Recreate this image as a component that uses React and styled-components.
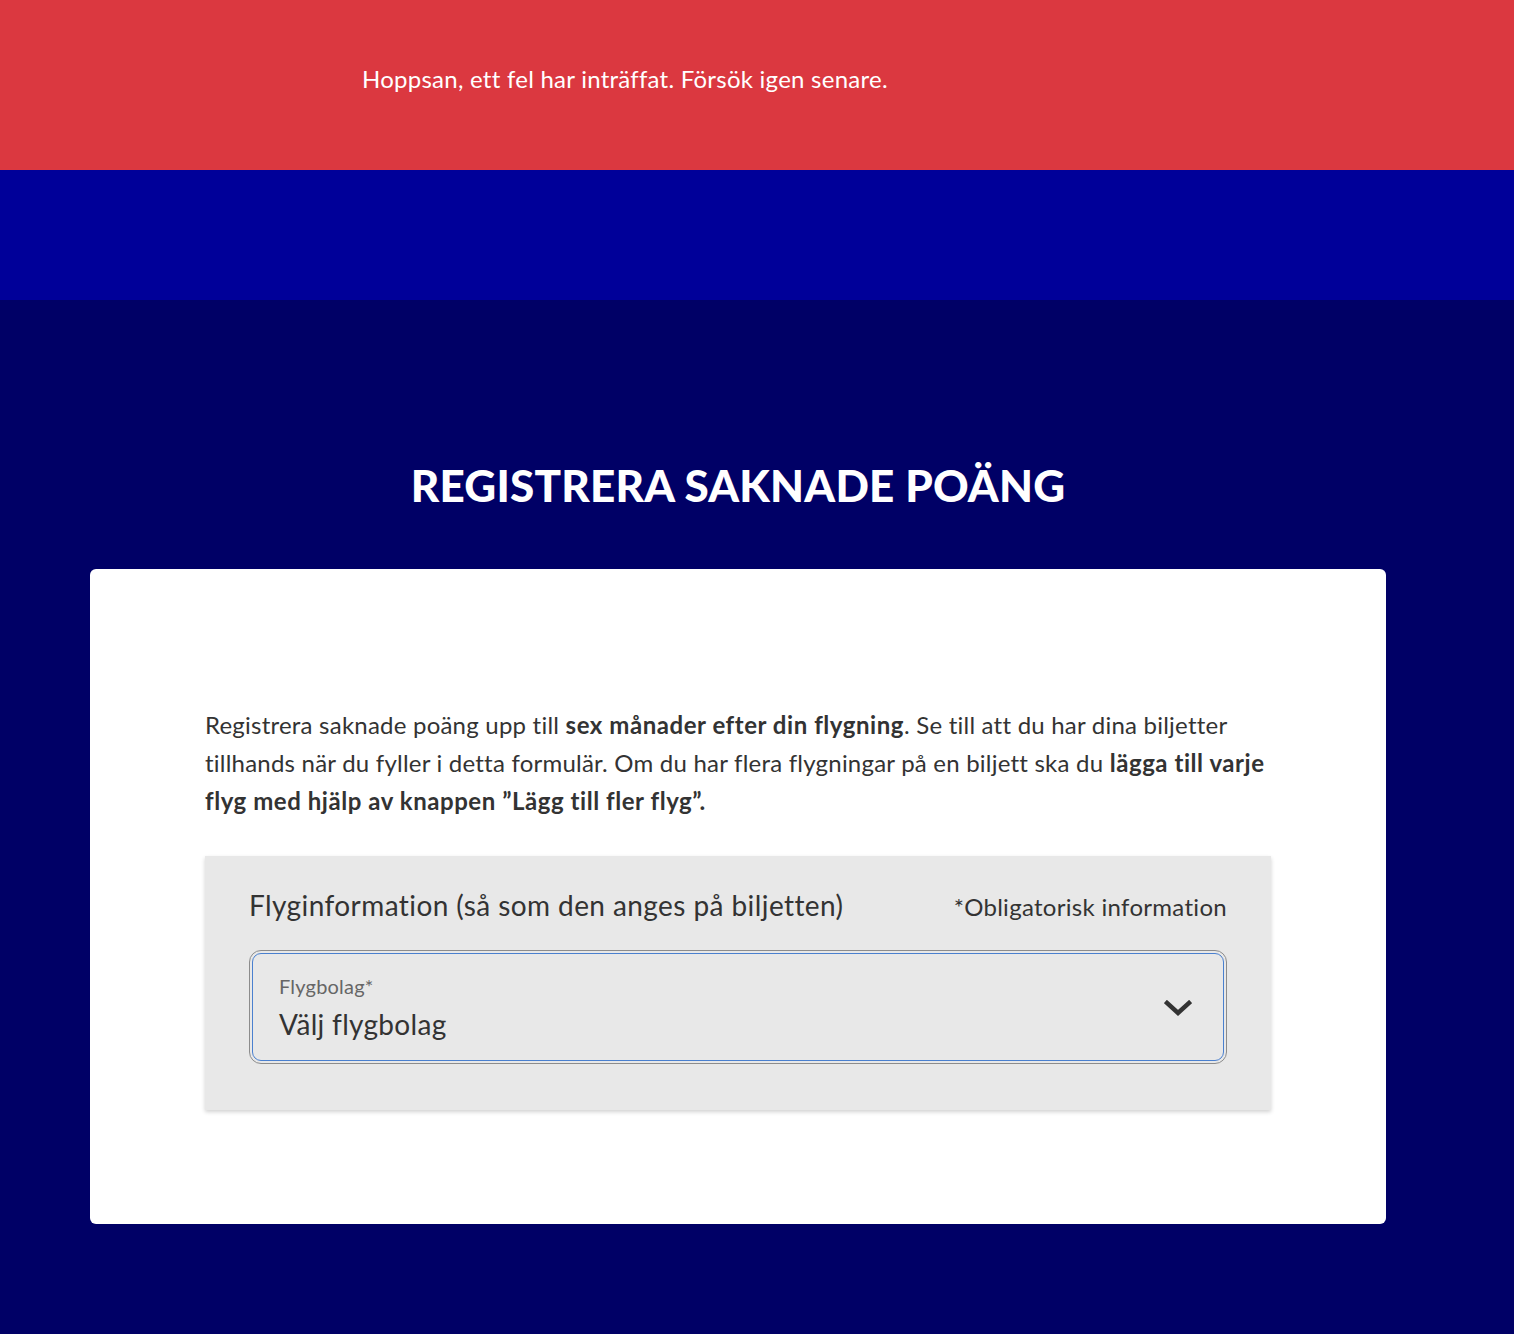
import React from "react";
import styled, { createGlobalStyle } from "styled-components";

const Global = createGlobalStyle`
  html, body { margin: 0; padding: 0; }
  body {
    background: #000066;
    font-family: Lato, "Open Sans", sans-serif;
    -webkit-font-smoothing: antialiased;
  }
  * { box-sizing: border-box; }
`;

const Page = styled.div`
  min-height: 1334px;
  background: #000066;
  display: flex;
  flex-direction: column;
`;

const ErrorBanner = styled.div`
  background: #db3840;
  height: 170px;
  padding: 62px 0 0 362px;
  color: #fff;
  font-size: 24px;
  line-height: 34px;
  letter-spacing: 0.25px;
`;

const BlueBand = styled.div`
  background: #000099;
  height: 130px;
`;

const Main = styled.main`
  display: flex;
  flex-direction: column;
  align-items: center;
  padding: 157px 0 112px;
  width: 1296px;
  margin-left: 90px;
`;

const Title = styled.h1`
  margin: 0 0 56px;
  color: #fff;
  font-family: Lato, sans-serif;
  font-weight: 900;
  font-size: 44px;
  line-height: 56px;
  letter-spacing: 0.2px;
  text-transform: uppercase;
`;

const Card = styled.section`
  width: 100%;
  background: #fff;
  border-radius: 6px;
  padding: 137px 115px 114px;
`;

const Intro = styled.p`
  margin: 0 0 36px;
  color: #333;
  font-size: 24px;
  line-height: 38px;
  letter-spacing: 0.22px;
  strong { font-weight: 700; letter-spacing: 0.55px; }
`;

const Panel = styled.div`
  background: #e8e8e8;
  box-shadow: 0 2px 4px rgba(0, 0, 0, 0.18);
  padding: 32px 44px 46px;
`;

const PanelHead = styled.div`
  display: flex;
  justify-content: space-between;
  align-items: baseline;
  margin-bottom: 31px;
`;

const PanelTitle = styled.h2`
  margin: 0;
  color: #333;
  font-weight: 400;
  font-size: 28px;
  line-height: 34px;
  letter-spacing: 0.42px;
`;

const Required = styled.span`
  color: #333;
  font-size: 24px;
  letter-spacing: 0.3px;
`;

const Select = styled.div`
  margin: 3px;
  height: 108px;
  border: 1px solid #4a80cf;
  border-radius: 9px;
  outline: 1px solid #8c8c8c;
  outline-offset: 2px;
  display: flex;
  align-items: center;
  justify-content: space-between;
  padding: 4px 31px 0 26px;
`;

const SelectText = styled.div`
  display: flex;
  flex-direction: column;
`;

const Label = styled.span`
  color: #666;
  font-size: 20px;
  line-height: 24px;
  margin-bottom: 6px;
  letter-spacing: 0.2px;
`;

const Value = styled.span`
  color: #333;
  font-size: 28px;
  line-height: 40px;
  letter-spacing: 0.3px;
`;

const Chevron = () => (
  <svg width="28" height="18" viewBox="0 0 28 18" aria-hidden="true">
    <path d="M3 3 L14 13 L25 3" fill="none" stroke="#333" strokeWidth="4.5" strokeLinecap="square" />
  </svg>
);

export default function App() {
  return (
    <Page>
      <Global />
      <ErrorBanner>Hoppsan, ett fel har inträffat. Försök igen senare.</ErrorBanner>
      <BlueBand />
      <Main>
        <Title>Registrera saknade poäng</Title>
        <Card>
          <Intro>
            Registrera saknade poäng upp till <strong>sex månader efter din flygning</strong>. Se till att du har dina biljetter tillhands när du fyller i detta formulär. Om du har flera flygningar på en biljett ska du <strong>lägga till varje flyg med hjälp av knappen ”Lägg till fler flyg”.</strong>
          </Intro>
          <Panel>
            <PanelHead>
              <PanelTitle>Flyginformation (så som den anges på biljetten)</PanelTitle>
              <Required>*Obligatorisk information</Required>
            </PanelHead>
            <Select>
              <SelectText>
                <Label>Flygbolag*</Label>
                <Value>Välj flygbolag</Value>
              </SelectText>
              <Chevron />
            </Select>
          </Panel>
        </Card>
      </Main>
    </Page>
  );
}
